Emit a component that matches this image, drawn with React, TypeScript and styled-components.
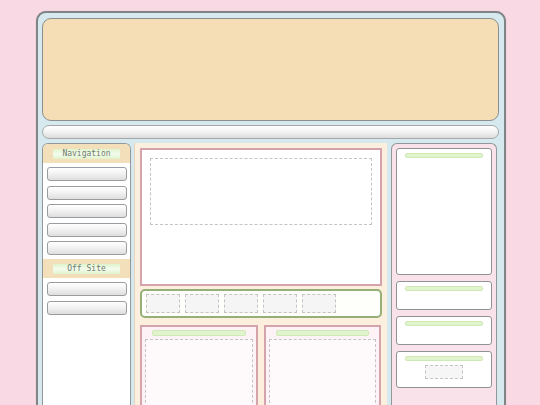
import React from "react";
import styled, { createGlobalStyle } from "styled-components";

const Global = createGlobalStyle`
  html, body { margin: 0; padding: 0; background: #f9dae4; overflow: hidden; }
  body { font-family: "DejaVu Sans", sans-serif; }
`;

const Frame = styled.div`
  box-sizing: border-box;
  margin: 11px 0 0 36px;
  width: 470px;
  border: 2px solid #7f8486;
  border-radius: 10px;
  background: #d5e9ee;
  padding: 5px 5px 0 4px;
  box-shadow: 0 0 1px rgba(0, 0, 0, 0.3);
`;

const Header = styled.header`
  box-sizing: border-box;
  height: 103px;
  border: 1.5px solid #8b8f90;
  border-radius: 9px;
  background: #f5deb5;
`;

const NavBar = styled.nav`
  box-sizing: border-box;
  margin-top: 4px;
  height: 14px;
  border: 1px solid #a4a8aa;
  border-radius: 7px;
  background: linear-gradient(#ffffff 0%, #f4f4f4 45%, #dcdcdc 100%);
`;

const Columns = styled.div`
  display: grid;
  grid-template-columns: 89px 253px 107px;
  column-gap: 3px;
  margin-top: 4px;
  height: 280px;
`;

const Sidebar = styled.aside`
  box-sizing: border-box;
  border: 1.5px solid #939799;
  border-bottom: none;
  border-radius: 6px 6px 0 0;
  background: #ffffff;
  overflow: hidden;
`;

const SectionHead = styled.div`
  display: flex;
  justify-content: center;
  align-items: center;
  height: 19px;
  background: #f3dfb9;
`;

const Label = styled.span`
  display: block;
  width: 67px;
  height: 10px;
  line-height: 10px;
  text-align: center;
  font-family: "DejaVu Sans Mono", "Liberation Mono", monospace;
  font-size: 8px;
  color: #727a70;
  background: linear-gradient(#dff3cd 0%, #f4fcec 50%, #dff3cd 100%);
`;

const ButtonList = styled.div`
  display: flex;
  flex-direction: column;
  gap: 4.6px;
  padding: 4px 3.5px 4px 3.5px;
`;

const NavButton = styled.div`
  box-sizing: border-box;
  height: 14px;
  border: 1px solid #9a9d9f;
  border-radius: 3px;
  background: linear-gradient(#ffffff 0%, #f3f3f3 45%, #dedede 100%);
`;

const Main = styled.main`
  box-sizing: border-box;
  border-left: 1px solid #ead3bd;
  background: #fcefdd;
  padding: 5px 5px 0 5px;
`;

const Feature = styled.section`
  box-sizing: border-box;
  height: 138px;
  border: 2px solid #d5a3ab;
  background: #ffffff;
  padding: 8px;
`;

const Dashed = styled.div<{ $w?: string; $h: number; $bg?: string }>`
  box-sizing: border-box;
  width: ${(p) => p.$w ?? "100%"};
  height: ${(p) => p.$h}px;
  border: 1px dashed #c4c4c4;
  background: ${(p) => p.$bg ?? "transparent"};
`;

const Strip = styled.div`
  box-sizing: border-box;
  display: flex;
  gap: 5px;
  margin-top: 3px;
  height: 29px;
  border: 2px solid #94b078;
  border-radius: 5px;
  background: #fefffb;
  padding: 3px 3.5px;
`;

const Cards = styled.div`
  display: grid;
  grid-template-columns: 118px 117px;
  column-gap: 6px;
  margin-top: 7px;
`;

const Card = styled.div`
  box-sizing: border-box;
  height: 90px;
  border: 2px solid #d5a3ab;
  background: #fdf2f5;
  padding: 3px 3px 0;
  display: flex;
  flex-direction: column;
  gap: 3px;
`;

const Bar = styled.div<{ $inset: number }>`
  box-sizing: border-box;
  height: 6px;
  margin: 0 ${(p) => p.$inset}px;
  border: 1px solid #cfe9b6;
  border-radius: 2px;
  background: #e1f4cd;
`;

const RightCol = styled.aside`
  box-sizing: border-box;
  margin-left: 1px;
  border: 1.5px solid #939799;
  border-bottom: none;
  border-radius: 6px 6px 0 0;
  background: #f9e2e9;
  padding: 4px 4px 0 4px;
  display: flex;
  flex-direction: column;
  gap: 6px;
`;

const Widget = styled.div<{ $h: number }>`
  box-sizing: border-box;
  height: ${(p) => p.$h}px;
  border: 1.5px solid #8e9294;
  border-radius: 3px;
  background: #ffffff;
  padding: 3.5px 0 0;
  display: flex;
  flex-direction: column;
  align-items: center;
  gap: 4px;
`;

const WidgetBar = styled(Bar)`
  align-self: stretch;
  margin: 0 8px;
  height: 5.5px;
`;

export default function App() {
  return (
    <>
      <Global />
      <Frame>
        <Header />
        <NavBar />
        <Columns>
          <Sidebar>
            <SectionHead>
              <Label>Navigation</Label>
            </SectionHead>
            <ButtonList>
              {[0, 1, 2, 3, 4].map((i) => (
                <NavButton key={i} />
              ))}
            </ButtonList>
            <SectionHead>
              <Label>Off Site</Label>
            </SectionHead>
            <ButtonList>
              <NavButton />
              <NavButton />
            </ButtonList>
          </Sidebar>
          <Main>
            <Feature>
              <Dashed $h={67} />
            </Feature>
            <Strip>
              {[0, 1, 2, 3, 4].map((i) => (
                <Dashed key={i} $w="34px" $h={19} $bg="#f5f5f5" />
              ))}
            </Strip>
            <Cards>
              <Card>
                <Bar $inset={7} />
                <Dashed $h={80} $bg="#fef9fa" />
              </Card>
              <Card>
                <Bar $inset={7} />
                <Dashed $h={80} $bg="#fef9fa" />
              </Card>
            </Cards>
          </Main>
          <RightCol>
            <Widget $h={127}>
              <WidgetBar $inset={8} />
            </Widget>
            <Widget $h={29}>
              <WidgetBar $inset={8} />
            </Widget>
            <Widget $h={29}>
              <WidgetBar $inset={8} />
            </Widget>
            <Widget $h={37}>
              <WidgetBar $inset={8} />
              <Dashed $w="38px" $h={14} $bg="#f6f6f6" />
            </Widget>
          </RightCol>
        </Columns>
      </Frame>
    </>
  );
}
